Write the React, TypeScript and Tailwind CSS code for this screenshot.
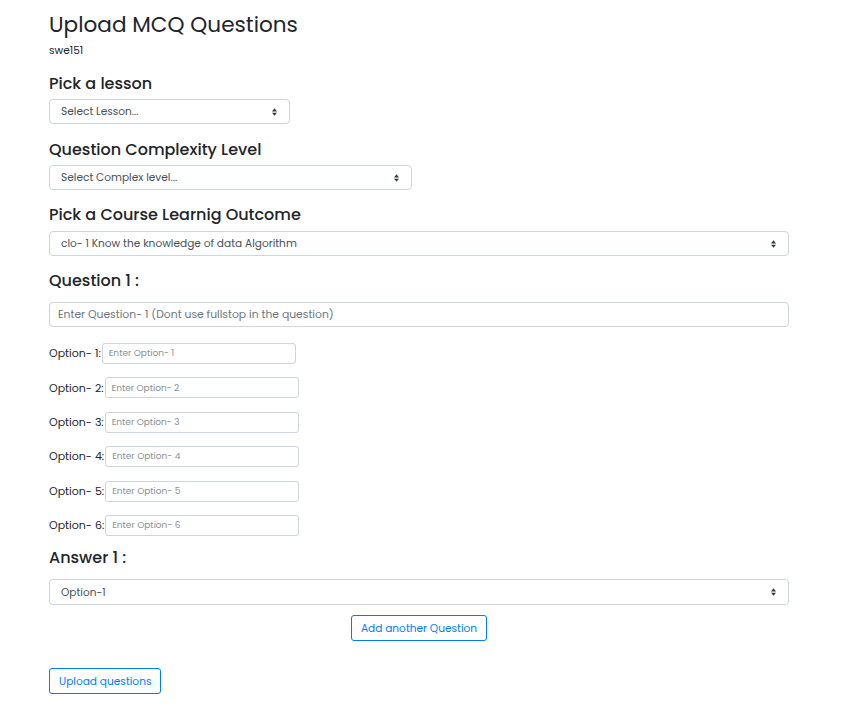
import React from "react";

const font = { fontFamily: "Poppins, 'Noto Sans', sans-serif" };

const Caret = () => (
  <svg viewBox="0 0 8 12" className="w-[5px] h-[8px] text-[#343a40]" fill="currentColor">
    <path d="M4 0 L8 5 H0 Z" />
    <path d="M4 12 L8 7 H0 Z" />
  </svg>
);

function Select({ value, width, tall }: { value: string; width: string; tall?: boolean }) {
  return (
    <div
      className={`${width} ${tall ? "h-[26px]" : "h-[25px]"} flex items-center justify-between border border-[#ced4da] rounded-[4px] pl-[11px] pr-[12px] pt-[1px] text-[10.6px] text-[#495057] bg-white`}
    >
      <span>{value}</span>
      <Caret />
    </div>
  );
}

function OptionRow({ n }: { n: number }) {
  return (
    <div className="flex items-center h-[21px] text-[11px] text-[#212529]">
      <span>Option- {n}:</span>
      <div className="ml-[1px] w-[194px] h-[21px] border border-[#ced4da] rounded-[3px] flex items-center pl-[6px] pt-[1px] text-[9px] text-[#8a9097]">
        Enter Option- {n}
      </div>
    </div>
  );
}

export default function App() {
  return (
    <div className="min-h-screen bg-white text-[#212529]" style={font}>
      <div className="pl-[49px] w-[789px] pt-[9px] pb-[34px]">
        <h1 className="text-[21.6px] leading-[32px] font-normal">Upload MCQ Questions</h1>
        <p className="text-[10.6px] leading-[16px] mt-[2px]">swe151</p>

        <h2 className="text-[16px] leading-[20px] font-medium mt-[15px]">Pick a lesson</h2>
        <div className="mt-[5px]">
          <Select value="Select Lesson..." width="w-[241px]" />
        </div>

        <h2 className="text-[16px] leading-[20px] font-medium mt-[16px]">Question Complexity Level</h2>
        <div className="mt-[5px]">
          <Select value="Select Complex level..." width="w-[363px]" />
        </div>

        <h2 className="text-[16px] leading-[20px] font-medium mt-[15px]">Pick a Course Learnig Outcome</h2>
        <div className="mt-[6px]">
          <Select value="clo- 1 Know the knowledge of data Algorithm" width="w-full" />
        </div>

        <h2 className="text-[16px] leading-[20px] font-medium mt-[15px]">Question 1 :</h2>
        <div className="mt-[11px] h-[25px] border border-[#ced4da] rounded-[4px] flex items-center pl-[8px] pt-[1px] text-[10.8px] text-[#6c757d]">
          Enter Question- 1 (Dont use fullstop in the question)
        </div>

        <div className="mt-[16px] flex flex-col gap-[13.4px]">
          {[1, 2, 3, 4, 5, 6].map((n) => (
            <OptionRow key={n} n={n} />
          ))}
        </div>

        <h2 className="text-[16px] leading-[20px] font-medium mt-[12px]">Answer 1 :</h2>
        <div className="mt-[11px]">
          <Select value="Option-1" width="w-full" tall />
        </div>

        <div className="flex justify-center mt-[10px]">
          <button className="h-[26px] px-[9px] pt-[1px] border border-[#007bff] rounded-[3px] text-[10.6px] text-[#007bff] bg-white">
            Add another Question
          </button>
        </div>

        <button className="mt-[27px] h-[26px] px-[9px] pt-[1px] border border-[#007bff] rounded-[3px] text-[10.6px] text-[#007bff] bg-white">
          Upload questions
        </button>
      </div>
    </div>
  );
}
